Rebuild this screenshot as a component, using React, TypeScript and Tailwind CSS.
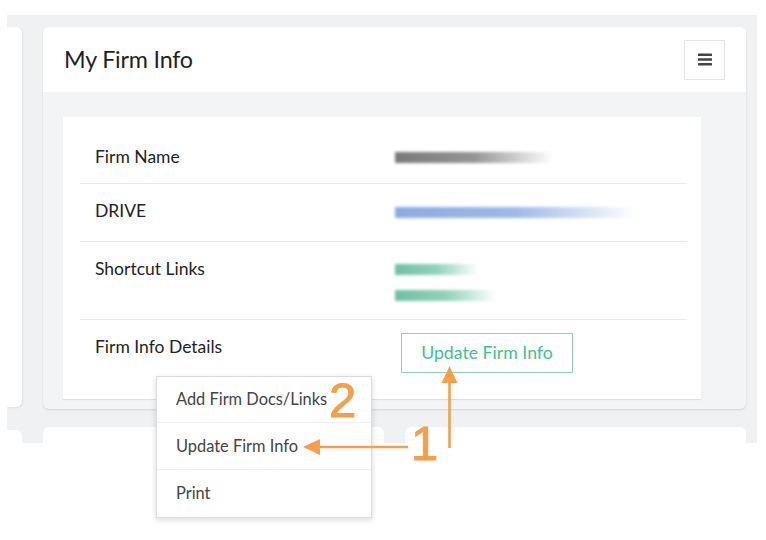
import React from 'react';

const ORANGE = '#f4a04a';

const MenuBars = () => (
  <svg width="14" height="13" viewBox="0 0 14 13" fill="#444">
    <rect x="0" y="0.5" width="14" height="2.6" rx="0.6" />
    <rect x="0" y="5.2" width="14" height="2.6" rx="0.6" />
    <rect x="0" y="9.9" width="14" height="2.6" rx="0.6" />
  </svg>
);

// blurred placeholder for redacted values
const Smudge = ({ width, color }: { width: number; color: 'gray' | 'blue' | 'green' }) => {
  const cls =
    color === 'gray'
      ? 'from-[#6b6b6b] via-[#8a8a8a]'
      : color === 'blue'
      ? 'from-[#7fa3dd] via-[#93b3e6]'
      : 'from-[#5fb99a] via-[#86cdb3]';
  return (
    <div
      className={`h-[11px] bg-gradient-to-r ${cls} to-transparent blur-[1.5px] opacity-90`}
      style={{ width }}
    />
  );
};

const Row = ({ label, children, className }: { label: string; children?: React.ReactNode; className?: string }) => (
  <div className={`flex items-start border-b border-[#e8e9eb] ${className ?? ''}`}>
    <div className="w-[315px] pl-[15px] shrink-0 text-[17.5px] leading-[24px] text-[#222]">{label}</div>
    <div className="flex-1">{children}</div>
  </div>
);

export default function App() {
  return (
    <div className="relative w-[766px] h-[540px] bg-white font-['Lato',sans-serif] overflow-hidden">
      <div className="mt-[15px] ml-[7px] w-[750px] h-[428px] bg-[#f0f1f3] overflow-hidden flex pt-[12px]">
        {/* left column, mostly cut off */}
        <div className="w-[15px] shrink-0 flex flex-col gap-[23px]">
          <div className="h-[380px] bg-white rounded-r-md shadow-[1px_1px_2px_rgba(0,0,0,0.08)]" />
          <div className="flex-1 bg-white rounded-tr-md" />
        </div>

        <div className="ml-[21px] w-[703px] shrink-0 flex flex-col gap-[18px]">
          {/* My Firm Info card */}
          <div className="h-[382px] bg-[#f3f4f6] rounded-md shadow-[0_1px_2px_rgba(0,0,0,0.12)] overflow-hidden flex flex-col">
            <div className="h-[65px] bg-white flex items-center justify-between pl-[21px] pr-[21px]">
              <h2 className="text-[23.3px] text-[#1f1f1f] tracking-[-0.2px]">My Firm Info</h2>
              <button className="w-[41px] h-[40px] border border-[#e2e3e5] bg-white flex items-center justify-center">
                <MenuBars />
              </button>
            </div>
            <div className="pt-[25px] pl-[20px]">
              <div className="w-[638px] h-[282px] bg-white shadow-[0_1px_1px_rgba(0,0,0,0.08)] px-[14px] pl-[17px]">
                <Row label="Firm Name" className="pt-[28px] pb-[14px]">
                  <div className="pt-[7px]">
                    <Smudge width={158} color="gray" />
                  </div>
                </Row>
                <Row label="DRIVE" className="pt-[15px] pb-[18px]">
                  <div className="pt-[8px]">
                    <Smudge width={242} color="blue" />
                  </div>
                </Row>
                <Row label="Shortcut Links" className="pt-[15px] pb-[18px]">
                  <div className="flex flex-col gap-[15px] pt-[7px]">
                    <Smudge width={83} color="green" />
                    <Smudge width={102} color="green" />
                  </div>
                </Row>
                <div className="flex items-start pt-[13px]">
                  <div className="w-[315px] pl-[15px] shrink-0 pt-[2px] text-[17.5px] leading-[24px] text-[#222]">
                    Firm Info Details
                  </div>
                  <button className="ml-[6px] w-[172px] h-[40px] border border-[#8fd2bc] text-[#3fbf95] text-[17.7px]">
                    Update Firm Info
                  </button>
                </div>
              </div>
            </div>
          </div>

          {/* lower cards */}
          <div className="flex-1 flex gap-[21px]">
            <div className="w-[341px] bg-white rounded-t-md" />
            <div className="w-[342px] bg-white rounded-t-md" />
          </div>
        </div>
      </div>

      {/* dropdown menu */}
      <div className="absolute left-[156px] top-[376px] w-[216px] bg-white border border-[#dcdcdc] shadow-[0_2px_6px_rgba(0,0,0,0.15)] text-[16.4px] text-[#444]">
        <div className="h-[46px] flex items-center px-[19px] border-b border-[#f0f0f0]">Add Firm Docs/Links</div>
        <div className="h-[47px] flex items-center px-[19px] border-b border-[#f0f0f0]">Update Firm Info</div>
        <div className="h-[47px] flex items-center px-[19px]">Print</div>
      </div>

      {/* annotations */}
      <svg className="absolute left-0 top-0 pointer-events-none" width="766" height="540">
        <line x1="318" y1="447" x2="408" y2="447" stroke={ORANGE} strokeWidth="2.6" />
        <polygon points="303,447 320,439 320,455" fill={ORANGE} />
        <line x1="449.5" y1="448" x2="449.5" y2="380" stroke={ORANGE} strokeWidth="2.6" />
        <polygon points="449.5,366 441.5,383 457.5,383" fill={ORANGE} />
      </svg>
      <div className="absolute left-[329px] top-[376px] text-[49px] leading-[49px] text-[#f4a04a] font-['Liberation_Sans',sans-serif] [-webkit-text-stroke:1px_#f4a04a]">
        2
      </div>
      <div className="absolute left-[411px] top-[419px] text-[49px] leading-[49px] text-[#f4a04a] font-['Liberation_Sans',sans-serif] [-webkit-text-stroke:1px_#f4a04a]">
        1
      </div>
    </div>
  );
}
